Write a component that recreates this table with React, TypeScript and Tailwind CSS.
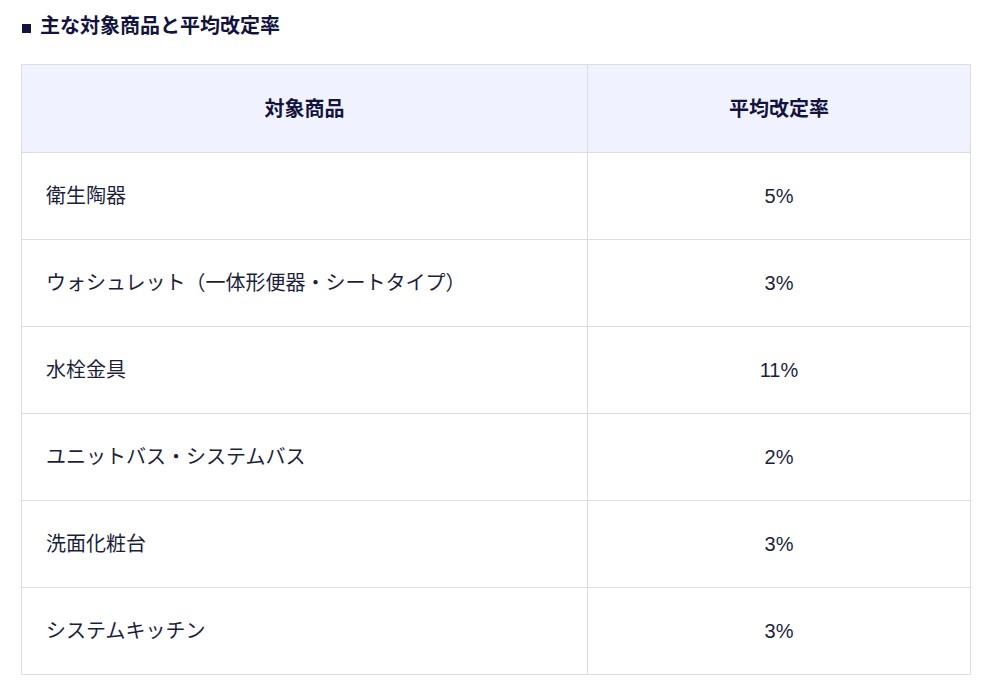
import React from "react";

const rows: [string, string][] = [
  ["衛生陶器", "5%"],
  ["ウォシュレット（一体形便器・シートタイプ）", "3%"],
  ["水栓金具", "11%"],
  ["ユニットバス・システムバス", "2%"],
  ["洗面化粧台", "3%"],
  ["システムキッチン", "3%"],
];

export default function App() {
  return (
    <div
      className="w-[985px] h-[685px] bg-white text-[#1c1f3c]"
      style={{ fontFamily: '"Liberation Sans", "Noto Sans CJK JP", sans-serif' }}
    >
      <div className="h-[52px] flex items-center pl-[22px]">
        <span className="w-[9px] h-[9px] bg-[#13143d] mr-[9px] mt-[4px]" />
        <span className="text-[20px] font-bold text-[#13143d] leading-none">
          主な対象商品と平均改定率
        </span>
      </div>
      <div className="mt-[12px] ml-[21px] w-[950px] grid grid-cols-[566px_383px] border-l border-t border-[#dddddd]">
        <div className="h-[88px] flex items-center justify-center bg-[#f0f3ff] border-r border-b border-[#dddddd] text-[20px] font-bold text-[#13143d]">
          対象商品
        </div>
        <div className="h-[88px] flex items-center justify-center bg-[#f0f3ff] border-r border-b border-[#dddddd] text-[20px] font-bold text-[#13143d]">
          平均改定率
        </div>
        {rows.map(([name, rate]) => (
          <React.Fragment key={name}>
            <div className="h-[87px] flex items-center pl-[24px] border-r border-b border-[#dddddd] text-[20px]">
              {name}
            </div>
            <div className="h-[87px] flex items-center justify-center border-r border-b border-[#dddddd] text-[20px]">
              {rate}
            </div>
          </React.Fragment>
        ))}
      </div>
    </div>
  );
}
